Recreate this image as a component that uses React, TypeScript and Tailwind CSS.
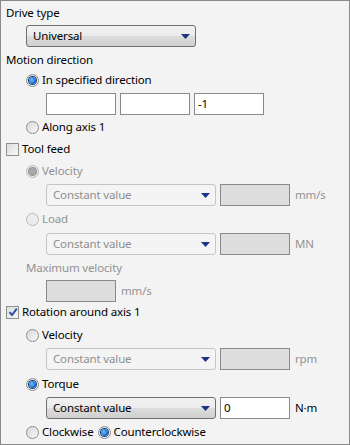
import React from "react";

// Win7-style property panel: drive / motion / feed / rotation settings

const Arrow = () => (
  <svg width="9" height="5" viewBox="0 0 9 5" className="block">
    <polygon points="0,0 9,0 4.5,5" fill="#1c3583" />
  </svg>
);

const Radio = ({ checked = false, disabled = false }: { checked?: boolean; disabled?: boolean }) => (
  <span
    className={`relative flex h-[13px] w-[13px] shrink-0 items-center justify-center rounded-full border ${
      disabled ? "border-[#b9b9b9] bg-[#ececec]" : "border-[#8a8d91] bg-gradient-to-br from-[#d9dadb] to-[#f6f6f6]"
    }`}
  >
    {checked && (
      <span
        className={`block h-[7px] w-[7px] rounded-full ${
          disabled
            ? "bg-[#a9a9a9] ring-1 ring-[#8f8f8f]"
            : "bg-[radial-gradient(circle_at_40%_40%,#6fc0ff,#1f6fcf_60%,#143e80)] ring-1 ring-[#1b3f76]"
        }`}
      />
    )}
  </span>
);

const Check = ({ checked = false }: { checked?: boolean }) => (
  <span className="relative flex h-[13px] w-[13px] shrink-0 items-center justify-center border border-[#8e8f8f] bg-gradient-to-br from-[#dcdcdc] to-[#f8f8f8]">
    {checked && (
      <svg width="10" height="10" viewBox="0 0 10 10" className="block">
        <path d="M1.5 5.2 L4 8 L8.8 1.6" fill="none" stroke="#2d4aa8" strokeWidth="2" />
      </svg>
    )}
  </span>
);

const RadioRow = ({
  label,
  checked,
  disabled,
  className = "",
}: {
  label: string;
  checked?: boolean;
  disabled?: boolean;
  className?: string;
}) => (
  <div className={`flex h-[16px] items-center gap-[3px] pl-[25px] ${disabled ? "text-[#929292]" : ""} ${className}`}>
    <Radio checked={checked} disabled={disabled} />
    <span>{label}</span>
  </div>
);

const Select = ({ value, disabled, width }: { value: string; disabled?: boolean; width: string }) => (
  <div
    className={`flex h-[22px] ${width} items-center justify-between rounded-[3px] border pl-[6px] pr-[5px] ${
      disabled
        ? "border-[#c3c5c7] bg-[#f4f4f4] text-[#8f8f8f]"
        : "border-[#707070] bg-[linear-gradient(#f2f2f2_0%,#ebebeb_50%,#dddddd_51%,#cfcfcf_100%)]"
    }`}
  >
    <span>{value}</span>
    <Arrow />
  </div>
);

const Field = ({ value = "", disabled }: { value?: string; disabled?: boolean }) => (
  <div
    className={`flex h-[22px] w-[70px] items-center border pl-[3px] ${
      disabled ? "border-[#8a8a8a] bg-[#dddddd]" : "border-[#8a8a8a] bg-white"
    }`}
  >
    {value}
  </div>
);

const SelectRow = ({
  disabled,
  unit,
  value = "",
  className = "",
}: {
  disabled?: boolean;
  unit: string;
  value?: string;
  className?: string;
}) => (
  <div className={`flex items-center pl-[45px] ${className}`}>
    <Select value="Constant value" disabled={disabled} width="w-[170px]" />
    <div className="ml-[4px]">
      <Field value={value} disabled={disabled} />
    </div>
    <span className={`ml-[5px] ${disabled ? "text-[#929292]" : ""}`}>{unit}</span>
  </div>
);

export default function App() {
  return (
    <div
      className="h-[445px] w-[350px] overflow-hidden border border-[#898989] bg-[#f3f3f3] text-[11.5px] leading-[16px] tracking-[-0.15px] text-black"
      style={{ fontFamily: '"Noto Sans", "Open Sans", sans-serif' }}
    >
      <div className="pt-[4px]">
        <div className="h-[16px] pl-[5px]">Drive type</div>
        <div className="mt-[4px] pl-[25px]">
          <Select value="Universal" width="w-[170px]" />
        </div>

        <div className="mt-[5px] h-[16px] pl-[5px]">Motion direction</div>
        <RadioRow label="In specified direction" checked className="mt-[4px]" />
        <div className="mt-[5px] flex gap-[4px] pl-[45px]">
          <Field />
          <Field />
          <Field value="-1" />
        </div>
        <RadioRow label="Along axis 1" className="mt-[4px]" />

        <div className="mt-[6px] flex h-[16px] items-center gap-[3px] pl-[5px]">
          <Check />
          <span>Tool feed</span>
        </div>
        <RadioRow label="Velocity" checked disabled className="mt-[6px]" />
        <SelectRow disabled unit="mm/s" className="mt-[5px]" />
        <RadioRow label="Load" disabled className="mt-[5px]" />
        <SelectRow disabled unit="MN" className="mt-[6px]" />
        <div className="mt-[5px] h-[16px] pl-[25px] text-[#929292]">Maximum velocity</div>
        <div className="mt-[4px] flex items-center pl-[45px]">
          <Field disabled />
          <span className="ml-[5px] text-[#929292]">mm/s</span>
        </div>

        <div className="mt-[2px] flex h-[16px] items-center gap-[3px] pl-[5px]">
          <Check checked />
          <span>Rotation around axis 1</span>
        </div>
        <RadioRow label="Velocity" className="mt-[7px]" />
        <SelectRow disabled unit="rpm" className="mt-[5px]" />
        <RadioRow label="Torque" checked className="mt-[6px]" />
        <SelectRow unit="N·m" value="0" className="mt-[5px]" />
        <div className="mt-[5px] flex h-[16px] items-center gap-[3px] pl-[25px]">
          <Radio />
          <span>Clockwise</span>
          <span className="ml-[1px]">
            <Radio checked />
          </span>
          <span>Counterclockwise</span>
        </div>
      </div>
    </div>
  );
}
